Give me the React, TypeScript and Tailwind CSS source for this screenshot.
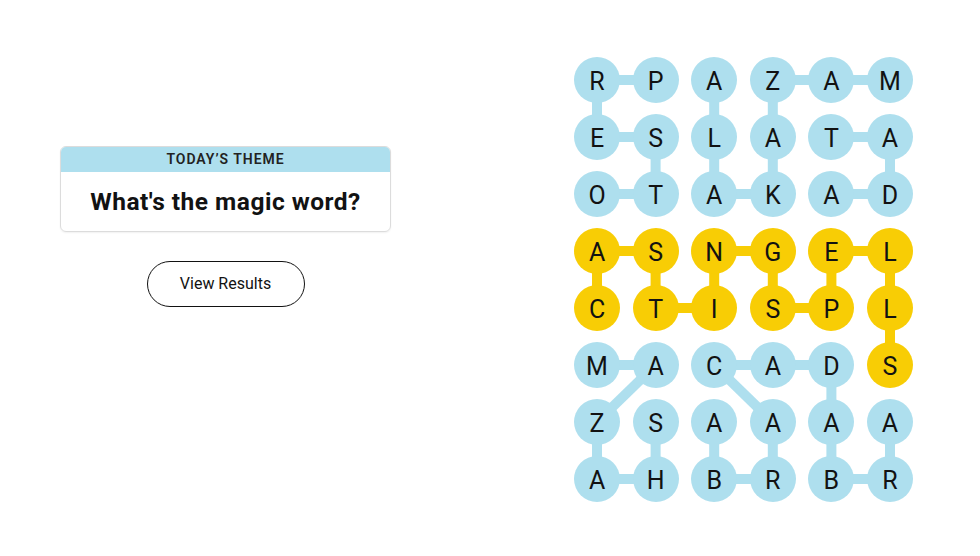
const ROWS = ["RPAZAM", "ESLATA", "OTAKAD", "ASNGEL", "CTISPL", "MACADS", "ZSAAAA", "AHBRBR"];

const BLUE = "#aedfee";
const YELLOW = "#f8cd05";

// yellow cells (spangram)
const gold = new Set(["3,0","3,1","3,2","3,3","3,4","3,5","4,0","4,1","4,2","4,3","4,4","4,5","5,5"]);

type Edge = [number, number, number, number];
const edges: Edge[] = [
  // presto
  [0,0,0,1],[0,0,1,0],[1,0,1,1],[1,1,2,1],[2,0,2,1],
  // alakazam
  [0,2,1,2],[1,2,2,2],[2,2,2,3],[2,3,1,3],[1,3,0,3],[0,3,0,4],[0,4,0,5],
  // tada
  [1,4,1,5],[1,5,2,5],[2,5,2,4],
  // casting spells
  [3,0,3,1],[3,0,4,0],[3,1,4,1],[4,1,4,2],[4,2,3,2],[3,2,3,3],[3,3,4,3],[4,3,4,4],[4,4,3,4],[3,4,3,5],[3,5,4,5],[4,5,5,5],
  // shazam
  [5,0,5,1],[5,1,6,0],[6,0,7,0],[7,0,7,1],[7,1,6,1],
  // abracadabra
  [6,2,7,2],[7,2,7,3],[7,3,6,3],[6,3,5,2],[5,2,5,3],[5,3,5,4],[5,4,6,4],[6,4,7,4],[7,4,7,5],[7,5,6,5],
];

const cx = (c: number) => 23 + c * 58.6;
const cy = (r: number) => 23 + r * 57;

function Board() {
  return (
    <div className="relative">
      <svg className="absolute left-0 top-0" width="339" height="445">
        {edges.map(([r1, c1, r2, c2], i) => (
          <line
            key={i}
            x1={cx(c1)}
            y1={cy(r1)}
            x2={cx(c2)}
            y2={cy(r2)}
            stroke={gold.has(`${r1},${c1}`) ? YELLOW : BLUE}
            strokeWidth={10}
          />
        ))}
      </svg>
      <div className="relative grid grid-cols-[repeat(6,46px)] gap-x-[12.6px] gap-y-[11px]">
        {ROWS.map((row, r) =>
          row.split("").map((ch, c) => (
            <div
              key={`${r}-${c}`}
              className={`flex h-[46px] w-[46px] items-center justify-center rounded-full pt-[2px] text-[25px] leading-none text-[#121212] ${
                gold.has(`${r},${c}`) ? "bg-[#f8cd05]" : "bg-[#aedfee]"
              }`}
            >
              {ch}
            </div>
          ))
        )}
      </div>
    </div>
  );
}

export default function App() {
  return (
    <div className="flex h-[556px] w-[980px] bg-white font-['Roboto',sans-serif] text-[#121212]">
      <div className="ml-[60px] flex w-[331px] flex-col items-center pt-[146px]">
        <div className="w-full overflow-hidden rounded-md border border-[#dcdcdc] shadow-[0_1px_2px_rgba(0,0,0,0.06)]">
          <div className="flex h-[25px] items-center justify-center bg-[#aedfee] text-[14px] font-semibold tracking-[0.07em] text-[#222]">
            TODAY’S THEME
          </div>
          <div className="flex h-[59px] items-center justify-center pt-[2px] text-[24.5px] font-bold tracking-[0.02em]">
            What's the magic word?
          </div>
        </div>
        <button className="mt-[29px] flex h-[46px] w-[158px] items-center justify-center rounded-full border border-[#121212] bg-white text-[16px] text-[#121212]">
          View Results
        </button>
      </div>
      <div className="ml-auto mr-[67px] mt-[57px]">
        <Board />
      </div>
    </div>
  );
}
